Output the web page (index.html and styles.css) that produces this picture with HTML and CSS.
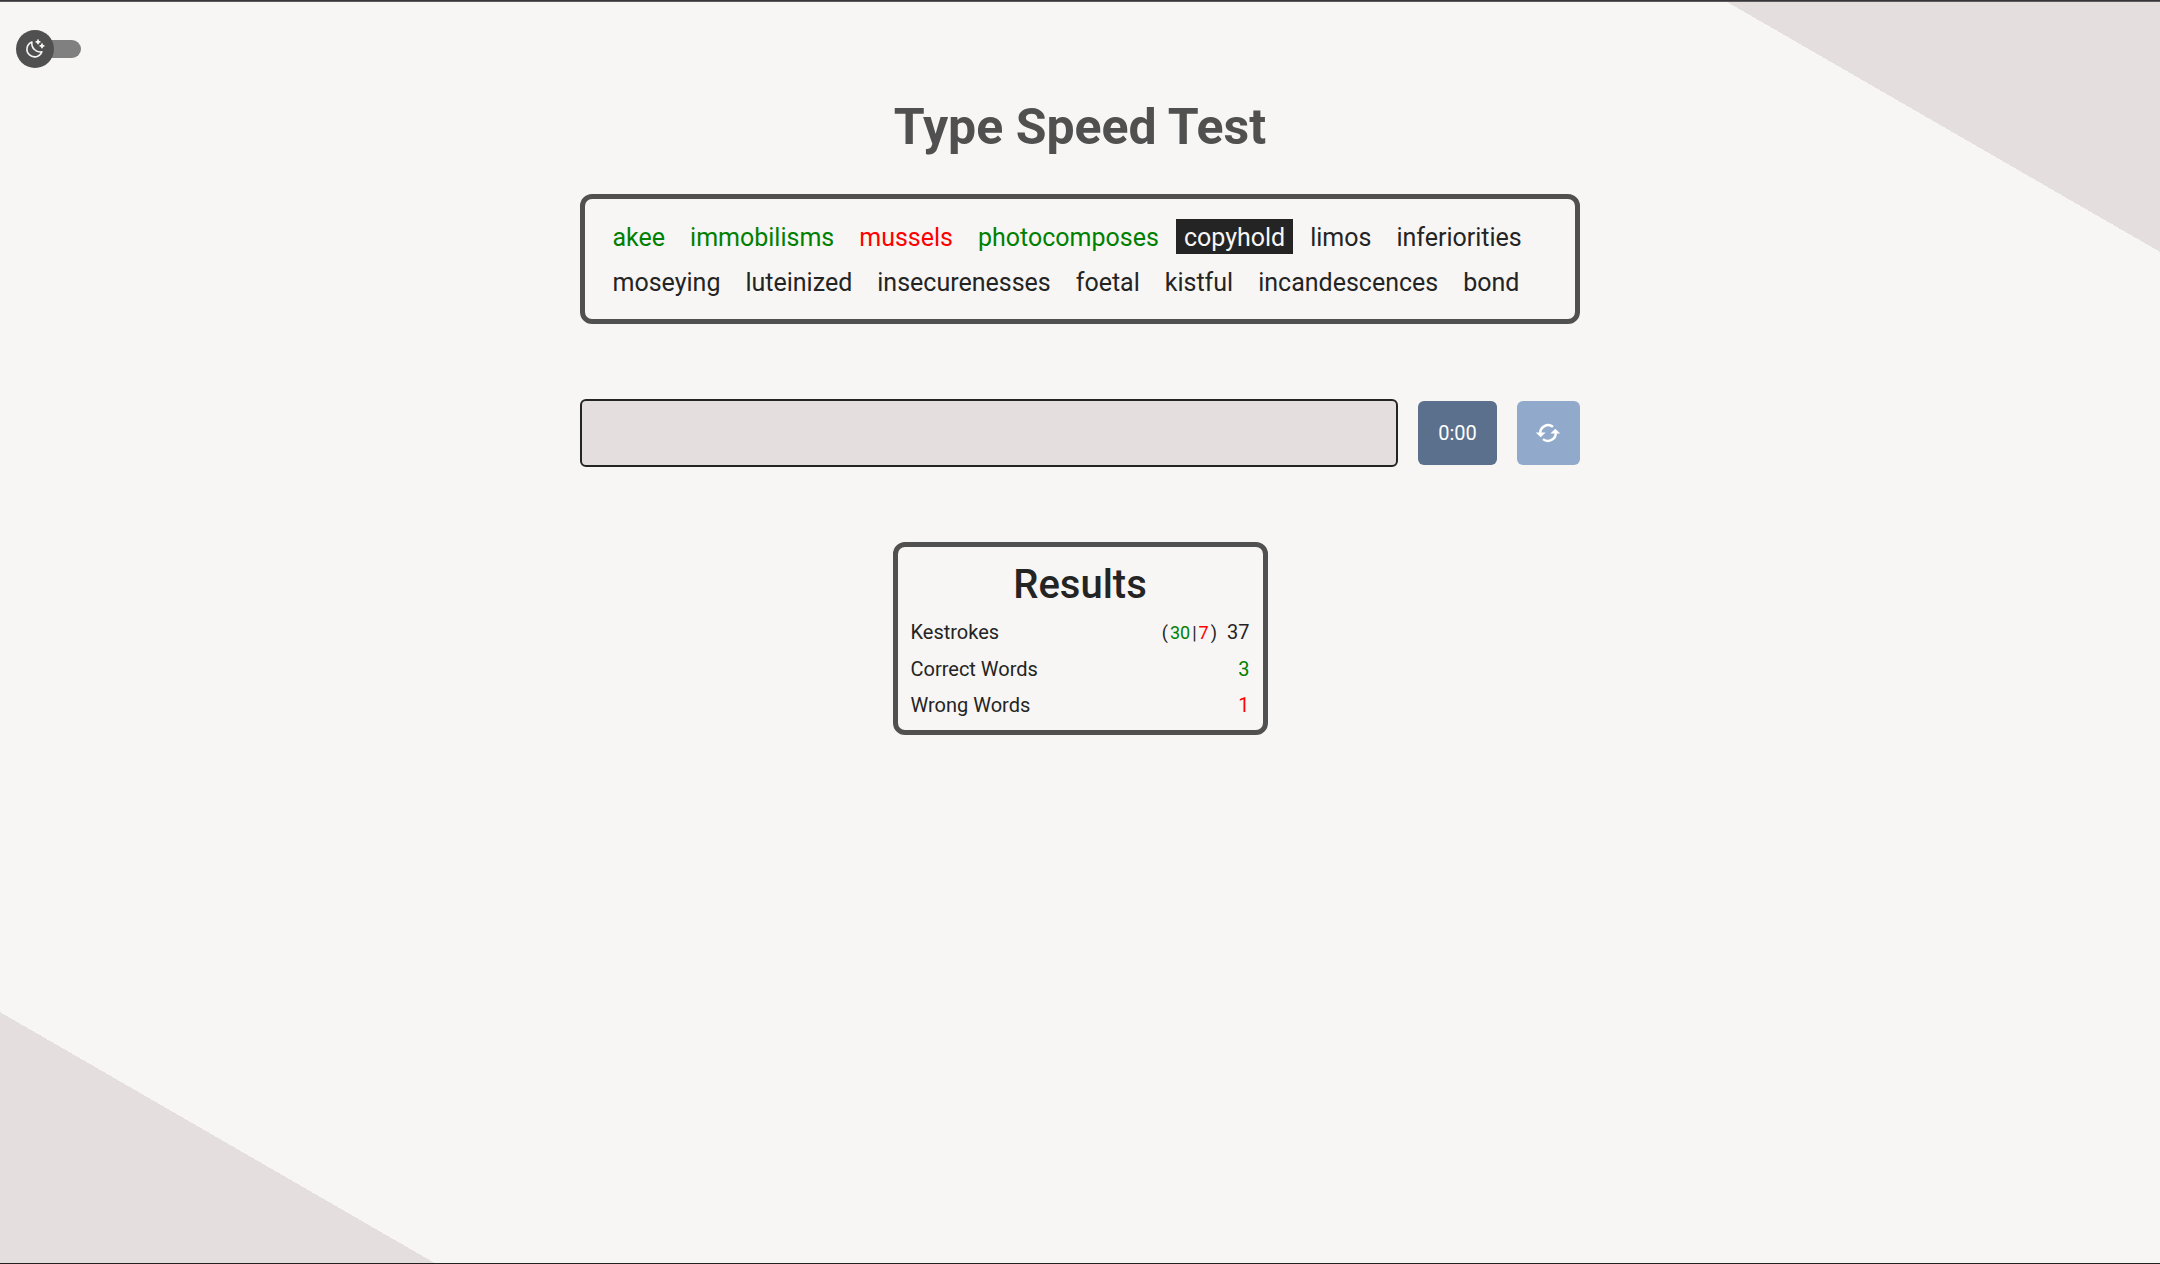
FILE: index.html
```html
<!DOCTYPE html>
<html lang="en">
<head>
<meta charset="utf-8">
<title>Type Speed Test</title>
<link rel="stylesheet" href="styles.css">
</head>
<body>
<div class="page">
  <header class="toolbar">
    <button class="toggle" aria-label="Toggle dark mode">
      <span class="toggle-track"></span>
      <span class="toggle-knob">
        <svg class="moon" viewBox="0 0 18 18" fill="none" stroke="currentColor" stroke-width="1.6" stroke-linejoin="round"><path d="M5.9 2A7.7 7.7 0 1 0 15.9 11.8A8.6 8.6 0 0 1 5.9 2Z"/><path d="M12 -.6v4.8M9.6 1.8h4.8M16 3.5v4.8M13.6 5.9h4.8" stroke-width="1.8"/></svg>
      </span>
    </button>
  </header>
  <main class="content">
    <h1 class="title">Type Speed Test</h1>
    <section class="words">
      <span class="word correct">akee</span>
      <span class="word correct">immobilisms</span>
      <span class="word wrong">mussels</span>
      <span class="word correct">photocomposes</span>
      <span class="word current">copyhold</span>
      <span class="word">limos</span>
      <span class="word">inferiorities</span>
      <span class="word">moseying</span>
      <span class="word">luteinized</span>
      <span class="word">insecurenesses</span>
      <span class="word">foetal</span>
      <span class="word">kistful</span>
      <span class="word">incandescences</span>
      <span class="word">bond</span>
    </section>
    <section class="controls">
      <input class="entry" type="text" aria-label="Type here">
      <div class="timer">0:00</div>
      <button class="restart" aria-label="Restart">
        <svg class="sync" viewBox="0 0 24 18" fill="none" stroke="currentColor" stroke-width="2.5"><path d="M4.3 9.5A7.8 7.8 0 0 1 17 2.9M19.7 8.5A7.8 7.8 0 0 1 7 15.1"/><path d="M-.2 8.4h9.8L4.7 13.2zM14.4 9.6h9.8L19.3 4.8z" fill="currentColor" stroke="none"/></svg>
      </button>
    </section>
    <section class="results">
      <h2 class="results-title">Results</h2>
      <div class="row"><span>Kestrokes</span><span class="total"><span class="split"><span>(</span><span class="correct">30</span><span>|</span><span class="wrong">7</span><span>)</span></span><span>37</span></span></div>
      <div class="row"><span>Correct Words</span><span class="correct">3</span></div>
      <div class="row"><span>Wrong Words</span><span class="wrong">1</span></div>
    </section>
  </main>
</div>
</body>
</html>
```
FILE: styles.css
```css
* {
  box-sizing: border-box;
}

body {
  margin: 0;
  color: #242424;
  font-family: Roboto, sans-serif;
}

.page {
  position: relative;
  height: 1264px;
  overflow: hidden;
  border-top: 1px solid #39363a;
  border-bottom: 1px solid #242122;
  background:
    linear-gradient(#5d5a5d, #5d5a5d) top / 100% 1px no-repeat,
    linear-gradient(#4c4a4a, #4c4a4a) 742px 100% / 56px 1px no-repeat border-box,
    linear-gradient(30deg, #e4dede 10%, #f7f6f4 10%, #f7f6f4 90%, #e4dede 90%) padding-box;
}

.toolbar {
  height: 97px;
  padding: 29px 16px;
}

.toggle {
  display: flex;
  align-items: center;
  padding: 0;
  border: 0;
  background: none;
}

.toggle-track {
  order: 2;
  width: 46px;
  height: 18px;
  margin-left: -19px;
  border-radius: 9px;
  background: #808080;
}

.toggle-knob {
  position: relative;
  display: flex;
  align-items: center;
  justify-content: center;
  width: 38px;
  height: 38px;
  border-radius: 50%;
  background: #505050;
  color: #f7f6f4;
}

.moon {
  width: 18px;
  height: 18px;
  overflow: visible;
}

.content {
  display: flex;
  flex-direction: column;
  align-items: center;
}

.title {
  margin: 0 0 38px;
  color: #505050;
  font-size: 50px;
  line-height: 58px;
}

.words {
  display: flex;
  flex-wrap: wrap;
  width: 1000px;
  padding: 15px;
  border: 5px solid #505050;
  border-radius: 12px;
}

.word {
  height: 35px;
  margin: 5px;
  padding: 0 7.5px;
  font-size: 25px;
  line-height: 37px;
}

.correct {
  color: green;
}

.wrong {
  color: red;
}

.current {
  background: #242424;
  color: #f7f6f4;
}

.controls {
  display: flex;
  align-items: center;
  gap: 20px;
  width: 1000px;
  margin: 75px 0;
}

.entry {
  flex: 1;
  height: 68px;
  border: 2px solid #242424;
  border-radius: 6px;
  background: #e4dede;
}

.timer,
.restart {
  display: flex;
  align-items: center;
  justify-content: center;
  height: 64px;
  border: 0;
  border-radius: 6px;
  color: #fff;
}

.timer {
  width: 79px;
  background: #5a708c;
  font-size: 20px;
}

.restart {
  width: 63px;
  padding: 0 1px 0 0;
  background: #91aacc;
}

.sync {
  width: 24px;
  height: 18px;
  overflow: visible;
}

.results {
  width: 375px;
  height: 193px;
  padding: 14px 13px 0;
  border: 5px solid #505050;
  border-radius: 12px;
}

.results-title {
  margin: 0 0 6px;
  font-size: 40px;
  font-weight: 500;
  line-height: 47px;
  text-align: center;
}

.row {
  display: flex;
  justify-content: space-between;
  font-size: 20px;
  line-height: 36.5px;
}

.total {
  display: flex;
  align-items: baseline;
  gap: 10px;
}

.split {
  display: flex;
  gap: 2px;
  font-size: 18px;
  line-height: 20px;
}
```
